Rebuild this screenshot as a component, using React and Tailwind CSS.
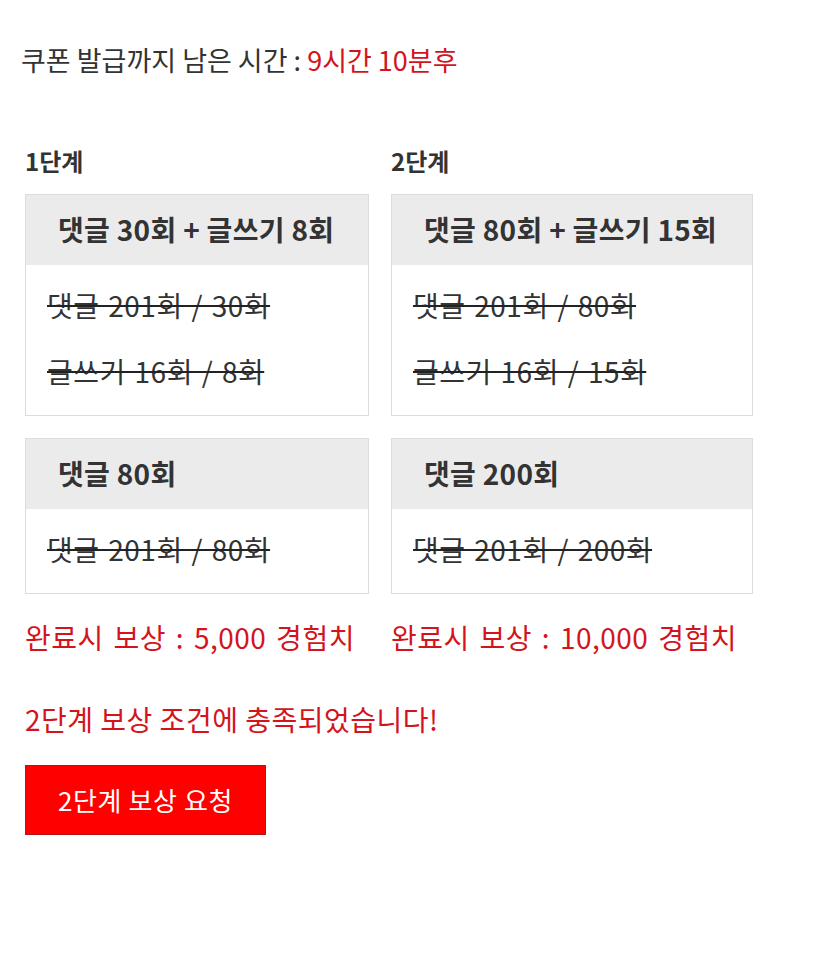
import React from 'react';

const font = { fontFamily: '"Noto Sans CJK KR", "Noto Sans", sans-serif' };

const stages = [
  {
    label: '1단계',
    width: 'w-[344px]',
    reward: '완료시 보상 : 5,000 경험치',
    cards: [
      { title: '댓글 30회 + 글쓰기 8회', lines: ['댓글 201회 / 30회', '글쓰기 16회 / 8회'] },
      { title: '댓글 80회', lines: ['댓글 201회 / 80회'] },
    ],
  },
  {
    label: '2단계',
    width: 'w-[362px]',
    reward: '완료시 보상 : 10,000 경험치',
    cards: [
      { title: '댓글 80회 + 글쓰기 15회', lines: ['댓글 201회 / 80회', '글쓰기 16회 / 15회'] },
      { title: '댓글 200회', lines: ['댓글 201회 / 200회'] },
    ],
  },
];

const Card = ({ title, lines }) => (
  <div className="border border-[#dcdcdc] bg-white">
    <div className="h-[70px] flex items-center px-[32px] pb-[3px] bg-[#ebebeb] text-[28px] font-bold text-[#333] tracking-[0.3px] whitespace-nowrap">
      {title}
    </div>
    <div className="flex flex-col gap-[26px] pt-[20px] pb-[24px] px-[21px]">
      {lines.map((l) => (
        <div key={l} className="h-[40px] leading-[40px] text-[28px] text-[#333] tracking-[0.5px] [word-spacing:2px] line-through decoration-[2px] decoration-[#222] whitespace-nowrap">
          {l}
        </div>
      ))}
    </div>
  </div>
);

const App = () => {
  return (
    <div className="min-h-screen bg-white pl-[25px] pt-[42px]" style={font}>
      <div className="-ml-[4px] leading-[36px] text-[27px] text-[#333] whitespace-nowrap">
        쿠폰 발급까지 남은 시간 : <span className="text-[#d3141c]">9시간 10분후</span>
      </div>

      <div className="flex gap-[22px] mt-[68px]">
        {stages.map((s) => (
          <div key={s.label} className={`${s.width} flex flex-col`}>
            <div className="leading-[30px] text-[24px] font-bold text-[#333]">{s.label}</div>
            <div className="flex flex-col gap-[22px] mt-[18px]">
              {s.cards.map((c) => (
                <Card key={c.title} {...c} />
              ))}
            </div>
            <div className="mt-[25px] leading-[36px] text-[28px] text-[#d3141c] tracking-[0.5px] [word-spacing:3px] whitespace-nowrap">
              {s.reward}
            </div>
          </div>
        ))}
      </div>

      <div className="mt-[46px] leading-[36px] text-[28px] text-[#d3141c] tracking-[0.5px] whitespace-nowrap">
        2단계 보상 조건에 충족되었습니다!
      </div>

      <button
        type="button"
        className="mt-[28px] w-[241px] h-[70px] bg-[#ff0000] border border-[#b8141a] text-white text-[26px] tracking-[0.6px] leading-none"
      >
        2단계 보상 요청
      </button>
    </div>
  );
};

export default App;
